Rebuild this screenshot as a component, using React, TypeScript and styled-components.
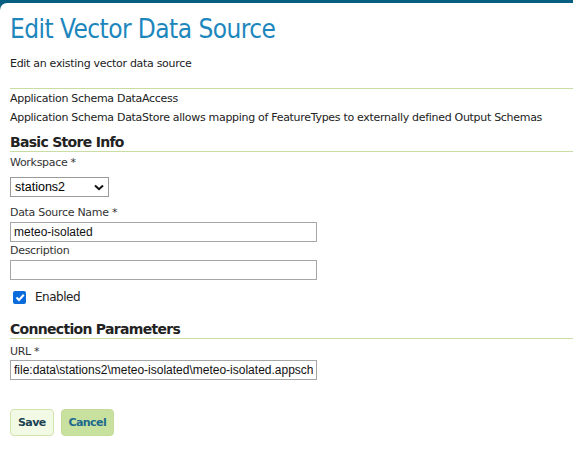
import React from "react";
import styled, { createGlobalStyle } from "styled-components";

const Global = createGlobalStyle`
  html, body { margin: 0; padding: 0; background: #ffffff; }
  body { font-family: "DejaVu Sans", Verdana, sans-serif; color: #222; }
`;

const Frame = styled.div`
  background: #065f80;
  padding-top: 3px;
  width: 573px;
  height: 450px;
  overflow: hidden;
`;

const Page = styled.div`
  background: #fff;
  border-top-left-radius: 7px;
  height: 100%;
  padding: 10px 0 0 10px;
  box-sizing: border-box;
`;

const Title = styled.h1`
  margin: 0;
  font-family: "DejaVu Sans Condensed", "DejaVu Sans", Verdana, sans-serif;
  font-weight: normal;
  font-size: 26px;
  letter-spacing: -0.55px;
  color: #1d87bd;
  line-height: 32px;
`;

const Lead = styled.p`
  margin: 11px 0 0;
  font-size: 11px;
  letter-spacing: -0.3px;
  line-height: 16px;
`;

const Info = styled.div`
  margin-top: 16px;
  border-top: 1px solid #c9dca4;
  font-size: 11px;
  letter-spacing: -0.3px;
  line-height: 19px;
`;

const Section = styled.h2<{ $gap?: number }>`
  margin: ${(p) => p.$gap ?? 6}px 0 0;
  font-size: 14px;
  font-weight: bold;
  letter-spacing: -0.7px;
  color: #222;
  line-height: 18px;
  padding-bottom: 0;
  border-bottom: 1px solid #c9dca4;
`;

const Label = styled.label<{ $gap?: number }>`
  display: block;
  font-size: 11px;
  letter-spacing: -0.3px;
  color: #333;
  line-height: 14px;
  margin-top: ${(p) => p.$gap ?? 4}px;
`;

const SelectWrap = styled.div`
  position: relative;
  margin-top: 7px;
  width: 99px;
  height: 20px;
`;

const Select = styled.select`
  appearance: none;
  -webkit-appearance: none;
  display: block;
  width: 100%;
  height: 100%;
  box-sizing: border-box;
  border: 1px solid #9a9a9a;
  border-radius: 0;
  background: #fff;
  margin: 0;
  padding: 0 4px;
  font-family: "Liberation Sans", Arial, sans-serif;
  font-size: 12.5px;
  color: #000;
  outline: none;
`;

const Chevron = styled.svg`
  position: absolute;
  right: 5px;
  top: 7px;
  pointer-events: none;
`;

const Input = styled.input<{ $gap?: number }>`
  display: block;
  margin: ${(p) => p.$gap ?? 2}px 0 0;
  width: 307px;
  height: 20px;
  box-sizing: border-box;
  border: 1px solid #a6a6a6;
  border-radius: 0;
  padding: 0 3px;
  font-family: "Liberation Sans", Arial, sans-serif;
  font-size: 12px;
  color: #111;
  background: #fff;
  outline: none;
`;

const CheckRow = styled.label`
  display: flex;
  align-items: center;
  margin-top: 10px;
  padding-left: 3px;
  font-size: 12px;
  letter-spacing: -0.5px;
  color: #222;
  gap: 9px;
`;

const Box = styled.span`
  width: 13px;
  height: 13px;
  border-radius: 2px;
  background: #0a6cdc;
  display: flex;
  align-items: center;
  justify-content: center;
`;

const Buttons = styled.div`
  display: flex;
  gap: 7px;
  margin-top: 29px;
`;

const Button = styled.button<{ $primary?: boolean }>`
  height: 27px;
  box-sizing: border-box;
  padding: 0 7px;
  margin: 0;
  display: flex;
  align-items: center;
  border-radius: 4px;
  border: 1px solid ${(p) => (p.$primary ? "#c4dc98" : "#d0e4ac")};
  background: ${(p) => (p.$primary ? "#c9e19f" : "#f2f9e4")};
  color: ${(p) => (p.$primary ? "#1c6a8c" : "#1b4253")};
  font-family: "DejaVu Sans", Verdana, sans-serif;
  font-size: 11px;
  font-weight: bold;
  letter-spacing: -0.6px;
`;

export default function App() {
  return (
    <>
      <Global />
      <Frame>
        <Page>
          <Title>Edit Vector Data Source</Title>
          <Lead>Edit an existing vector data source</Lead>
          <Info>
            <div>Application Schema DataAccess</div>
            <div>Application Schema DataStore allows mapping of FeatureTypes to externally defined Output Schemas</div>
          </Info>
          <Section>Basic Store Info</Section>
          <Label>Workspace *</Label>
          <SelectWrap>
            <Select defaultValue="stations2">
              <option value="stations2">stations2</option>
            </Select>
            <Chevron width="10" height="7" viewBox="0 0 10 7">
              <path d="M1 1.5 L5 5.2 L9 1.5" fill="none" stroke="#111" strokeWidth="2" />
            </Chevron>
          </SelectWrap>
          <Label $gap={9}>Data Source Name *</Label>
          <Input readOnly value="meteo-isolated" />
          <Label $gap={2}>Description</Label>
          <Input readOnly value="" />
          <CheckRow>
            <Box>
              <svg width="10" height="9" viewBox="0 0 10 9">
                <path d="M1.5 4.5 L4 7 L8.8 1.8" fill="none" stroke="#fff" strokeWidth="2" />
              </svg>
            </Box>
            <span>Enabled</span>
          </CheckRow>
          <Section $gap={16}>Connection Parameters</Section>
          <Label $gap={6}>URL *</Label>
          <Input $gap={1} readOnly value="file:data\stations2\meteo-isolated\meteo-isolated.appschema" />
          <Buttons>
            <Button type="button">Save</Button>
            <Button type="button" $primary>Cancel</Button>
          </Buttons>
        </Page>
      </Frame>
    </>
  );
}
